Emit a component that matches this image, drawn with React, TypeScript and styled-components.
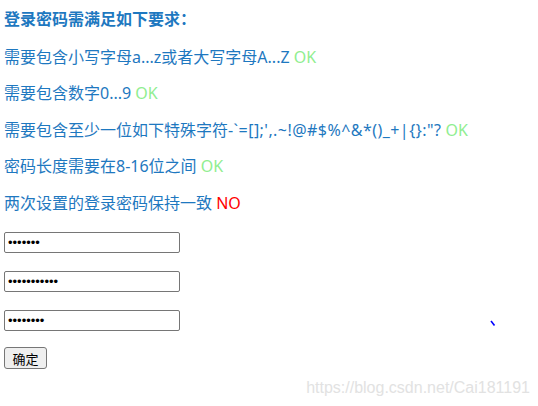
import React from "react"
import styled, { createGlobalStyle } from "styled-components"

const GlobalStyle = createGlobalStyle`
  html, body {
    margin: 0;
    padding: 0;
    background: #fff;
  }
`

const Page = styled.div`
  position: relative;
  width: 538px;
  height: 406px;
  padding: 8px 4px 0;
  box-sizing: border-box;
  font-family: "Noto Sans", "Noto Sans CJK SC", sans-serif;
  color: #1e78c0;
  overflow: hidden;
`

const Title = styled.h4`
  margin: 0;
  font-size: 16px;
  line-height: 22px;
  font-weight: bold;
`

const RuleList = styled.div`
  display: flex;
  flex-direction: column;
  gap: 15.5px;
  margin-top: 16.5px;
`

const Rule = styled.p`
  margin: 0;
  font-size: 16px;
  line-height: 21px;
  white-space: nowrap;
`

const Symbols = styled.span`
  letter-spacing: 0.45px;
`

const Status = styled.span<{ $ok: boolean }>`
  color: ${({ $ok }) => ($ok ? "#90ee90" : "#ff0000")};
`

const Form = styled.form`
  display: flex;
  flex-direction: column;
  align-items: flex-start;
  gap: 18px;
  margin-top: 18.5px;
`

const PasswordInput = styled.input`
  box-sizing: border-box;
  width: 176px;
  height: 21px;
  margin: 0;
  padding: 1px 3px;
  border: 1px solid #767676;
  border-radius: 2px;
  font-family: "Liberation Sans", sans-serif;
  font-size: 13px;
  color: #000;
  background: #fff;
`

const SubmitButton = styled.button`
  box-sizing: border-box;
  height: 22px;
  width: 43px;
  margin-top: -2px;
  padding: 0 6px;
  border: 1px solid #767676;
  border-radius: 3px;
  background: #efefef;
  font-family: "Noto Sans CJK SC", sans-serif;
  font-size: 13px;
  color: #000;
`

const Watermark = styled.div`
  position: absolute;
  right: 8px;
  bottom: 9px;
  font-family: "Liberation Sans", Arial, sans-serif;
  font-size: 16px;
  color: #e2e2e2;
  pointer-events: none;
`

const Tick = styled.svg`
  position: absolute;
  left: 490px;
  top: 320px;
`

type RuleItem = {
  text: string
  symbols?: string
  ok: boolean
}

const rules: RuleItem[] = [
  { text: "需要包含小写字母a...z或者大写字母A...Z", ok: true },
  { text: "需要包含数字0...9", ok: true },
  { text: "需要包含至少一位如下特殊字符", symbols: "-`=[];',.~!@#$%^&*()_+|{}:\"?", ok: true },
  { text: "密码长度需要在8-16位之间", ok: true },
  { text: "两次设置的登录密码保持一致", ok: false },
]

export default function App() {
  return (
    <Page>
      <GlobalStyle />
      <Title>登录密码需满足如下要求：</Title>
      <RuleList>
        {rules.map(r => (
          <Rule key={r.text}>
            {r.text}
            {r.symbols && <Symbols>{r.symbols}</Symbols>}{" "}
            <Status $ok={r.ok}>{r.ok ? "OK" : "NO"}</Status>
          </Rule>
        ))}
      </RuleList>
      <Form onSubmit={e => e.preventDefault()}>
        <PasswordInput type="password" defaultValue="abc1234" />
        <PasswordInput type="password" defaultValue="abc12345678" />
        <PasswordInput type="password" defaultValue="abc12345" />
        <SubmitButton type="submit">确定</SubmitButton>
      </Form>
      <Tick width="6" height="7" viewBox="0 0 6 7">
        <path d="M1 1 L4.5 5.5" stroke="#0000ff" strokeWidth="1.6" />
      </Tick>
      <Watermark>https://blog.csdn.net/Cai181191</Watermark>
    </Page>
  )
}
